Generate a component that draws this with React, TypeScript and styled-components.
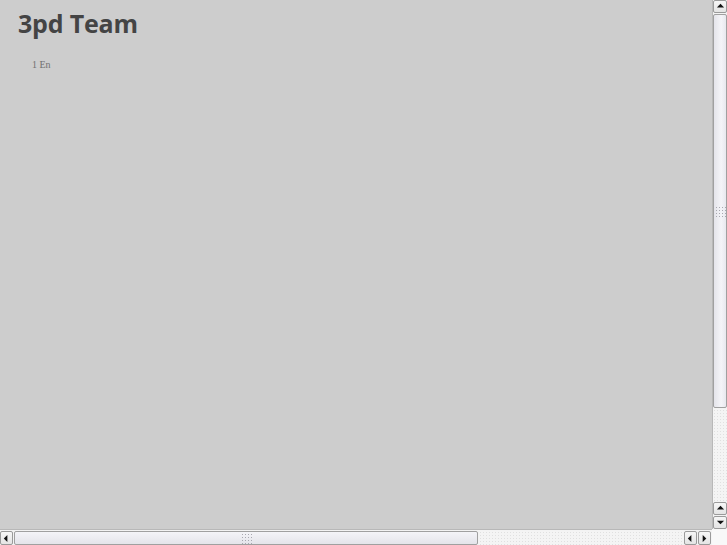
import styled, { createGlobalStyle } from "styled-components";

const GlobalStyle = createGlobalStyle`
  html, body {
    margin: 0;
    padding: 0;
    height: 100%;
    overflow: hidden;
  }
  #root {
    height: 100%;
  }
`;

const DOTS =
  "radial-gradient(circle, #e0e0e0 0.6px, transparent 0.8px) 0 0 / 3px 3px";

export default function App() {
  return (
    <>
      <GlobalStyle />
      <Window>
        <Page>
          <Title>3pd Team</Title>
          <Lang>1 En</Lang>
        </Page>

        <VScroll>
          <ArrowButton>
            <Arrow dir="up" />
          </ArrowButton>
          <VThumb>
            <Grip />
          </VThumb>
          <Track />
          <ArrowButton>
            <Arrow dir="up" />
          </ArrowButton>
          <ArrowButton>
            <Arrow dir="down" />
          </ArrowButton>
        </VScroll>

        <HScroll>
          <ArrowButton>
            <Arrow dir="left" />
          </ArrowButton>
          <HThumb>
            <Grip />
          </HThumb>
          <Track />
          <ArrowButton>
            <Arrow dir="left" />
          </ArrowButton>
          <ArrowButton>
            <Arrow dir="right" />
          </ArrowButton>
        </HScroll>

        <Corner />
      </Window>
    </>
  );
}

function Arrow({ dir }: { dir: "up" | "down" | "left" | "right" }) {
  const points = {
    up: "1,6 5,2 9,6",
    down: "1,3 5,7 9,3",
    left: "6,1 2,5 6,9",
    right: "3,1 7,5 3,9",
  }[dir];
  return (
    <svg width="9" height="9" viewBox="0 0 10 10">
      <polygon points={points} fill="#111" />
    </svg>
  );
}

const Window = styled.div`
  height: 100%;
  display: grid;
  grid-template-columns: 1fr 15px;
  grid-template-rows: 1fr 16px;
  background: #cdcdcd;
`;

const Page = styled.div`
  padding: 8px 18px;
  overflow: hidden;
`;

const Title = styled.h1`
  margin: 0;
  font-family: "Open Sans", "Liberation Sans", sans-serif;
  font-weight: 700;
  font-size: 25px;
  line-height: 30px;
  letter-spacing: -0.2px;
  color: #444444;
`;

const Lang = styled.p`
  margin: 21px 0 0 14px;
  font-family: "Liberation Serif", serif;
  font-size: 10px;
  color: #707070;
`;

const VScroll = styled.div`
  display: flex;
  flex-direction: column;
  gap: 1px;
  background: #f3f3f3;
  border-left: 1px solid #b8b8b8;
`;

const HScroll = styled.div`
  display: flex;
  gap: 1px;
  padding-top: 1px;
  background: #f3f3f3;
  border-top: 1px solid #b8b8b8;
  padding-right: 1px;
`;

const ArrowButton = styled.div`
  flex: 0 0 13px;
  min-height: 13px;
  min-width: 13px;
  display: flex;
  align-items: center;
  justify-content: center;
  background: linear-gradient(#f6f6f6, #e4e4e4);
  border: 1px solid #9a9a9a;
  border-radius: 2px;
  box-sizing: border-box;
`;

const VThumb = styled.div`
  flex: 0 0 392px;
  display: flex;
  align-items: center;
  justify-content: center;
  background: linear-gradient(90deg, #e4e4ea, #f4f4f8 60%, #e8e8ee);
  border: 1px solid #a0a0a0;
  border-radius: 2px;
`;

const HThumb = styled.div`
  flex: 0 0 462px;
  display: flex;
  align-items: center;
  justify-content: center;
  background: linear-gradient(#f4f4f8, #e4e4ea);
  border: 1px solid #a0a0a0;
  border-radius: 2px;
`;

const Grip = styled.div`
  width: 11px;
  height: 11px;
  background: radial-gradient(circle, #a8a8b0 0.7px, transparent 1px) 0 0 / 3px
    3px;
`;

const Track = styled.div`
  flex: 1;
  background: ${DOTS}, #f4f4f4;
`;

const Corner = styled.div`
  background: #f8f8f8;
`;
